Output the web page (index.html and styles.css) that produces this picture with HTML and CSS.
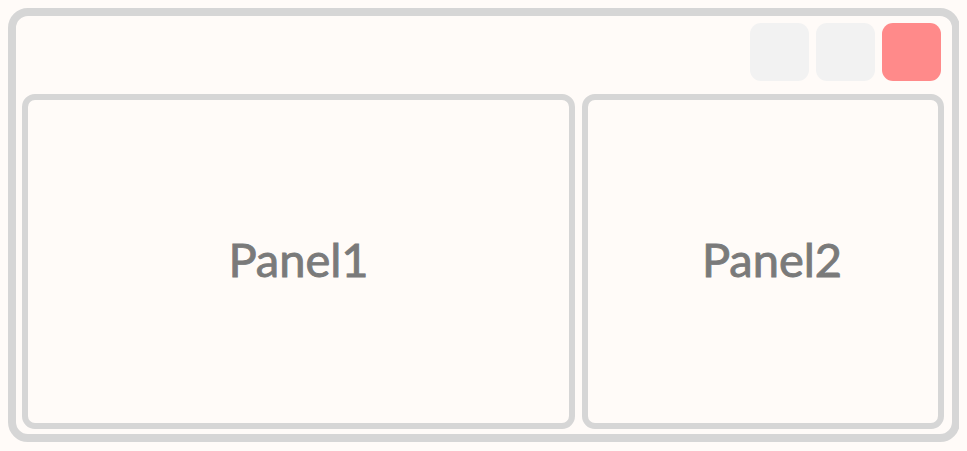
FILE: index.html
```html
<!DOCTYPE html>
<html>
<head>
<meta charset="utf-8">
<link rel="stylesheet" href="styles.css">
</head>
<body>
<div class="window">
  <div class="titlebar">
    <div class="btn"></div>
    <div class="btn"></div>
    <div class="btn close"></div>
  </div>
  <div class="panels">
    <div class="panel panel1">Panel1</div>
    <div class="panel panel2">Panel2</div>
  </div>
</div>
</body>
</html>
```
FILE: styles.css
```css
html, body {
  background: #fffbf8;
}
body {
  margin: 8px;
}
.window {
  box-sizing: border-box;
  width: 952px;
  height: 434px;
  border: 8px solid #d6d6d6;
  border-radius: 20px;
  background: #fffbf8;
  padding: 7px 8px 5px 6px;
  display: flex;
  flex-direction: column;
}
.titlebar {
  display: flex;
  justify-content: flex-end;
  gap: 7px;
  padding-right: 3px;
  margin-bottom: 13px;
}
.btn {
  width: 59px;
  height: 58px;
  border-radius: 11px;
  background: #f2f2f2;
}
.btn.close {
  background: #ff8a8a;
}
.panels {
  flex: 1;
  display: flex;
  gap: 7px;
}
.panel {
  box-sizing: border-box;
  border: 6px solid #d6d6d6;
  border-radius: 13px;
  background: #fffbf8;
  display: flex;
  align-items: center;
  justify-content: center;
  padding-bottom: 6px;
  font-family: "Lato", sans-serif;
  font-weight: 400;
  font-size: 47px;
  color: #7a7a7a;
  -webkit-text-stroke: 0.9px #7a7a7a;
}
.panel1 {
  width: 553px;
}
.panel2 {
  flex: 1;
  padding-left: 18px;
}
```
